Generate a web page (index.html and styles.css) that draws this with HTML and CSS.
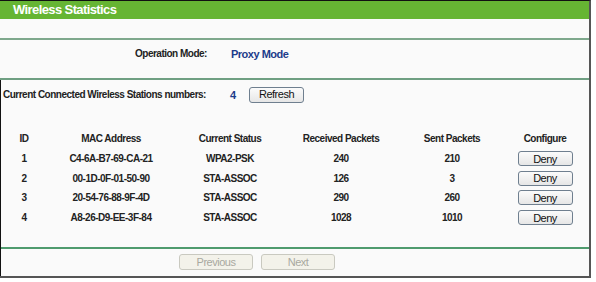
FILE: index.html
```html
<!DOCTYPE html>
<html lang="en">
<head>
    <meta charset="UTF-8">
    <title>Wireless Statistics</title>
    <link rel="stylesheet" href="styles.css">
</head>
<body>
    <div class="panel">
        <div class="title-bar">Wireless Statistics</div>
        <div class="spacer"></div>
        <div class="mode-row">
            <span class="mode-label">Operation Mode:</span>
            <span class="mode-value">Proxy Mode</span>
        </div>
        <div class="lower">
            <div class="stations-row">
                <span class="stations-label">Current Connected Wireless Stations numbers:</span>
                <span class="stations-count">4</span>
                <button class="btn refresh">Refresh</button>
            </div>
            <div class="stats-table">
                <div class="cell head">ID</div>
                <div class="cell head">MAC Address</div>
                <div class="cell head">Current Status</div>
                <div class="cell head">Received Packets</div>
                <div class="cell head">Sent Packets</div>
                <div class="cell head conf">Configure</div>

                <div class="cell">1</div>
                <div class="cell">C4-6A-B7-69-CA-21</div>
                <div class="cell">WPA2-PSK</div>
                <div class="cell">240</div>
                <div class="cell">210</div>
                <div class="cell conf"><button class="btn deny">Deny</button></div>

                <div class="cell">2</div>
                <div class="cell">00-1D-0F-01-50-90</div>
                <div class="cell">STA-ASSOC</div>
                <div class="cell">126</div>
                <div class="cell">3</div>
                <div class="cell conf"><button class="btn deny">Deny</button></div>

                <div class="cell">3</div>
                <div class="cell">20-54-76-88-9F-4D</div>
                <div class="cell">STA-ASSOC</div>
                <div class="cell">290</div>
                <div class="cell">260</div>
                <div class="cell conf"><button class="btn deny">Deny</button></div>

                <div class="cell">4</div>
                <div class="cell">A8-26-D9-EE-3F-84</div>
                <div class="cell">STA-ASSOC</div>
                <div class="cell">1028</div>
                <div class="cell">1010</div>
                <div class="cell conf"><button class="btn deny">Deny</button></div>
            </div>
            <div class="pager">
                <button class="btn pager-btn" disabled>Previous</button>
                <button class="btn pager-btn" disabled>Next</button>
            </div>
        </div>
    </div>
</body>
</html>
```

FILE: styles.css
```css
body {
    margin: 0;
    background-color: #ffffff;
    font-family: "Liberation Sans", Arial, sans-serif;
    font-size: 10px;
    letter-spacing: -0.5px;
    color: #222;
}
.panel {
    width: 589px;
    height: 275px;
    border-top: 1px solid #111;
    border-right: 2px solid #555;
    border-bottom: 2px solid #555;
    background-color: #fafafa;
    display: flex;
    flex-direction: column;
}
.title-bar {
    height: 18px;
    line-height: 17px;
    padding-left: 13px;
    background-color: #66b533;
    color: #fff;
    font-size: 13px;
    letter-spacing: -0.6px;
    font-weight: bold;
}
.spacer {
    height: 19px;
    border-bottom: 2px solid #7ea88c;
}
.mode-row {
    height: 40px;
    box-sizing: border-box;
    padding-top: 8px;
    display: flex;
    align-items: flex-start;
    border-bottom: 2px solid #6f9f82;
    font-weight: bold;
}
.mode-label {
    margin-left: 135px;
    width: 96px;
}
.mode-value {
    color: #1d3c8b;
    font-size: 11px;
}
.lower {
    flex: 1;
    border-left: 1px solid #111;
}
.stations-row {
    height: 29px;
    display: flex;
    align-items: center;
    font-weight: bold;
    padding-left: 2px;
}
.stations-label {
    width: 227px;
}
.stations-count {
    color: #1d3c8b;
    font-size: 11px;
    width: 19px;
}
.btn {
    font-family: "Liberation Sans", Arial, sans-serif;
    font-size: 11px;
    letter-spacing: -0.5px;
    color: #111;
    background: linear-gradient(#fbfbfb, #e6e6e6);
    border: 1px solid #6f7f8f;
    border-radius: 3px;
    padding: 0;
}
.refresh {
    width: 55px;
    height: 16px;
    line-height: 13px;
}
.stats-table {
    margin-top: 20px;
    display: grid;
    grid-template-columns: 46px 128px 110px 112px 110px 1fr;
    grid-auto-rows: 19.7px;
    font-weight: bold;
    height: 118px;
    border-bottom: 2px solid #4f9b6e;
}
.cell {
    display: flex;
    align-items: center;
    justify-content: center;
}
.conf {
    padding-right: 6px;
}
.deny {
    width: 55px;
    height: 15px;
    line-height: 12px;
}
.pager {
    display: flex;
    gap: 8px;
    padding: 5px 0 0 178px;
}
.pager-btn {
    width: 74px;
    height: 16px;
    line-height: 13px;
    color: #a8a8a0;
    background: #f3f2ea;
    border-color: #c9c9c0;
}
```
